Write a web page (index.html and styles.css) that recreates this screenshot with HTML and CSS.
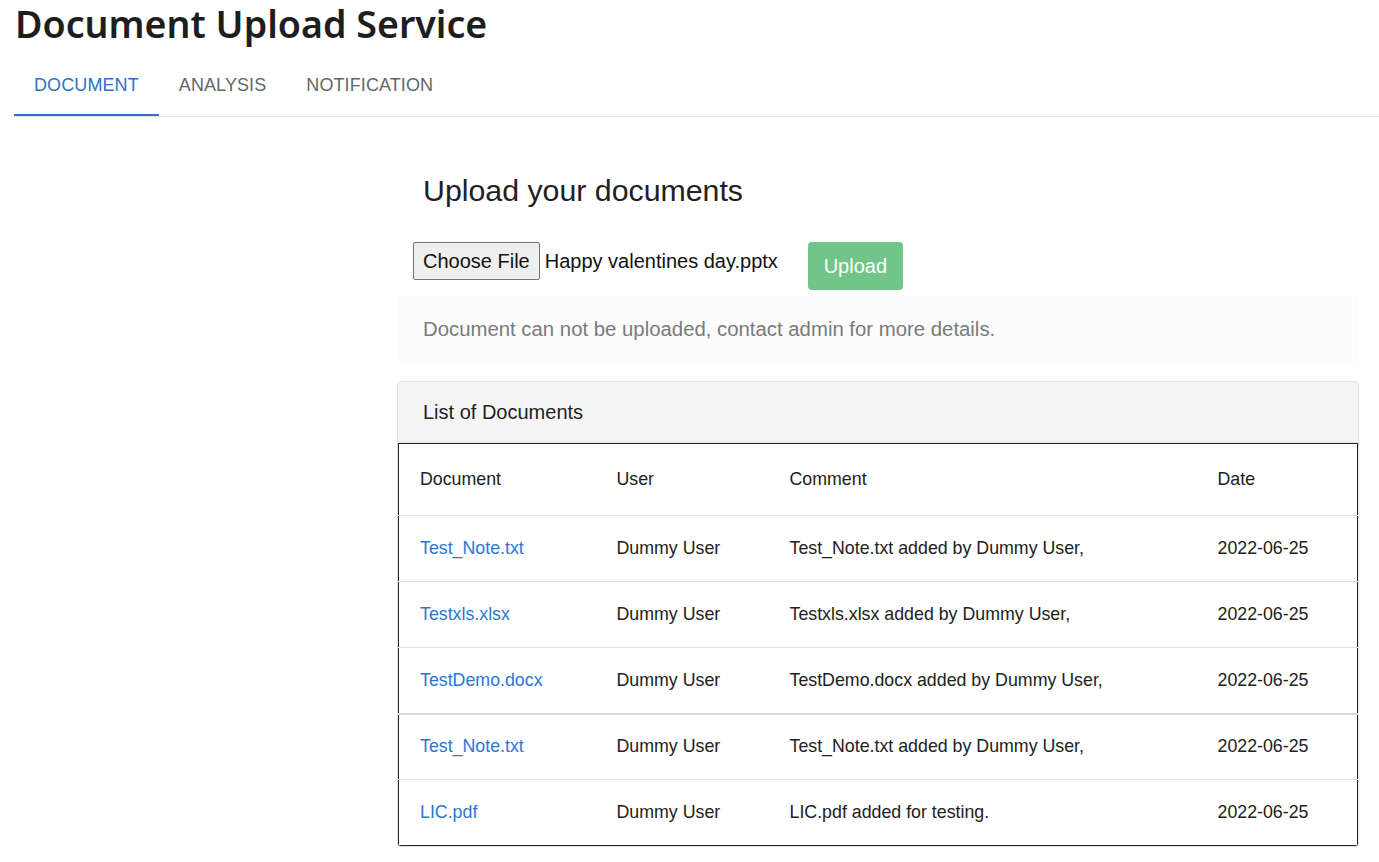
FILE: index.html
```html
<!DOCTYPE html>
<html lang="en">
<head>
<meta charset="utf-8">
<title>Document Upload Service</title>
<link rel="stylesheet" href="styles.css">
</head>
<body>
<header class="app-header">
  <h1 class="app-title">Document Upload Service</h1>
  <nav class="tabs">
    <a class="tab tab-active">DOCUMENT</a>
    <a class="tab">ANALYSIS</a>
    <a class="tab">NOTIFICATION</a>
  </nav>
</header>
<main class="content">
  <section class="panel">
    <h2 class="upload-title">Upload your documents</h2>
    <div class="upload-row">
      <div class="file-input">
        <span class="file-btn">Choose File</span>
        <span class="file-name">Happy valentines day.pptx</span>
      </div>
      <button class="upload-btn" type="button">Upload</button>
    </div>
    <div class="alert">Document can not be uploaded, contact admin for more details.</div>
    <div class="card">
      <div class="card-header">List of Documents</div>
      <table class="doc-table">
        <thead>
          <tr><th class="c-doc">Document</th><th class="c-user">User</th><th class="c-comment">Comment</th><th class="c-date">Date</th></tr>
        </thead>
        <tbody>
          <tr><td><a class="doc-link">Test_Note.txt</a></td><td>Dummy User</td><td>Test_Note.txt added by Dummy User,</td><td>2022-06-25</td></tr>
          <tr><td><a class="doc-link">Testxls.xlsx</a></td><td>Dummy User</td><td>Testxls.xlsx added by Dummy User,</td><td>2022-06-25</td></tr>
          <tr class="row-strong"><td><a class="doc-link">TestDemo.docx</a></td><td>Dummy User</td><td>TestDemo.docx added by Dummy User,</td><td>2022-06-25</td></tr>
          <tr><td><a class="doc-link">Test_Note.txt</a></td><td>Dummy User</td><td>Test_Note.txt added by Dummy User,</td><td>2022-06-25</td></tr>
          <tr><td><a class="doc-link">LIC.pdf</a></td><td>Dummy User</td><td>LIC.pdf added for testing.</td><td>2022-06-25</td></tr>
        </tbody>
      </table>
    </div>
  </section>
</main>
</body>
</html>
```

FILE: styles.css
```css
* { box-sizing: border-box; }
html, body { margin: 0; padding: 0; background: #fff; }
body {
  font-family: "Liberation Sans", Arial, sans-serif;
  color: #212121;
  width: 1379px;
  overflow: hidden;
}
.app-header { padding: 0 0 0 14px; }
.app-title {
  margin: 0;
  padding: 0 0 0 1px;
  font-family: "Noto Sans", "Open Sans", sans-serif;
  font-weight: 600;
  font-size: 37.6px;
  line-height: 48px;
  color: #1e1e1e;
}
.tabs {
  display: flex;
  margin-top: 6px;
  border-bottom: 1px solid #e0e0e0;
}
.tab {
  display: block;
  padding: 21px 20px 0;
  height: 62px;
  font-size: 18px;
  letter-spacing: 0.1px;
  color: #666;
  text-transform: uppercase;
}
.tab-active {
  color: #2f72c4;
  border-bottom: 2px solid #2f72c4;
  margin-bottom: -1px;
}
.content { padding: 0 20px 0 397px; }
.panel { width: 962px; }
.upload-title {
  margin: 0;
  padding: 55px 0 0 26px;
  font-size: 30.3px;
  font-weight: 400;
  line-height: 38px;
  color: #212121;
}
.upload-row {
  display: flex;
  align-items: flex-start;
  margin-top: 32px;
  padding-left: 16px;
}
.file-input {
  display: flex;
  align-items: center;
  height: 38px;
  font-size: 20px;
  color: #111;
}
.file-btn {
  display: flex;
  align-items: center;
  height: 38px;
  padding: 0 9px;
  background: #efefef;
  border: 1px solid #767676;
  border-radius: 2px;
  color: #111;
}
.file-name { margin-left: 5px; }
.upload-btn {
  margin-left: 30px;
  width: 95px;
  height: 48px;
  border: none;
  border-radius: 4px;
  background: #72c588;
  color: #fff;
  font-family: "Liberation Sans", Arial, sans-serif;
  font-size: 20px;
  padding: 0;
}
.alert {
  margin-top: 5px;
  height: 67px;
  display: flex;
  align-items: center;
  padding-left: 26px;
  background: #fcfcfc;
  color: #7a7a7a;
  font-size: 20.35px;
  padding-top: 2px;
}
.card {
  margin-top: 19px;
  border: 1px solid #e3e3e3;
  border-radius: 4px;
  overflow: hidden;
  width: 962px;
}
.card-header {
  height: 61px;
  display: flex;
  align-items: center;
  padding-left: 25px;
  background: #f5f5f5;
  font-size: 20px;
  color: #222;
}
.doc-table {
  width: 960px;
  border-collapse: collapse;
  border: 1px solid #222;
  box-shadow: 0 1px 3px rgba(0,0,0,0.35);
  font-size: 17.8px;
  color: #212121;
  margin-left: 0;
}
.doc-table th, .doc-table td {
  text-align: left;
  font-weight: 400;
  padding: 0 0 0 21px;
  border-bottom: 1px solid #e0e0e0;
}
.doc-table th { height: 72px; }
.doc-table td { height: 66px; }
.doc-table tbody tr:last-child td { border-bottom: none; }
.doc-table .row-strong td { border-bottom: 2px solid #d9d9d9; }
.c-doc { width: 197px; }
.c-user { width: 173px; }
.c-comment { width: 428px; }
.doc-link { color: #2a78d6; text-decoration: none; }
```
